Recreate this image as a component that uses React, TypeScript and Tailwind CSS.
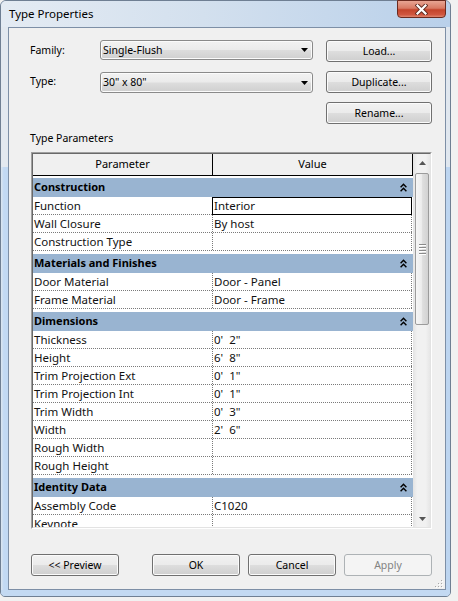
import React from "react";

const F = "font-['Noto_Sans',sans-serif]";

const btnBase =
  "flex items-center justify-center rounded-[3px] border border-[#707070] shadow-[inset_0_0_0_1px_#fbfbfb] bg-[linear-gradient(180deg,#f2f2f2_0%,#ebebeb_48%,#dddddd_52%,#cfcfcf_100%)] text-black text-[10.5px] leading-none";

function Btn({ children, className = "" }: { children: React.ReactNode; className?: string }) {
  return <div className={`${btnBase} ${className}`}>{children}</div>;
}

function Select({ value, className = "" }: { value: string; className?: string }) {
  return (
    <div
      className={`flex items-center justify-between rounded-[3px] border border-[#8a8a8a] shadow-[inset_0_0_0_1px_#fbfbfb] bg-[linear-gradient(180deg,#f2f2f2_0%,#ebebeb_48%,#dddddd_52%,#cfcfcf_100%)] pl-[2px] pr-[4px] text-[10.5px] leading-none text-black ${className}`}
    >
      <span className="whitespace-pre">{value}</span>
      <svg width="7" height="4" viewBox="0 0 7 4">
        <path d="M0 0 H7 L3.5 4 Z" fill="#000" />
      </svg>
    </div>
  );
}

function Collapse() {
  return (
    <svg width="7" height="9" viewBox="0 0 7 9">
      <path d="M0.6 4.2 L3.5 1.2 L6.4 4.2 M0.6 8.2 L3.5 5.2 L6.4 8.2" fill="none" stroke="#000" strokeWidth="1.4" />
    </svg>
  );
}

type Group = { name: string; rows: [string, string][] };

const groups: Group[] = [
  {
    name: "Construction",
    rows: [
      ["Function", "Interior"],
      ["Wall Closure", "By host"],
      ["Construction Type", ""],
    ],
  },
  {
    name: "Materials and Finishes",
    rows: [
      ["Door Material", "Door - Panel"],
      ["Frame Material", "Door - Frame"],
    ],
  },
  {
    name: "Dimensions",
    rows: [
      ["Thickness", "0'  2\""],
      ["Height", "6'  8\""],
      ["Trim Projection Ext", "0'  1\""],
      ["Trim Projection Int", "0'  1\""],
      ["Trim Width", "0'  3\""],
      ["Width", "2'  6\""],
      ["Rough Width", ""],
      ["Rough Height", ""],
    ],
  },
  {
    name: "Identity Data",
    rows: [
      ["Assembly Code", "C1020"],
      ["Keynote", ""],
    ],
  },
];

function Table() {
  return (
    <div className="ml-[1px] w-[401px] h-[377px] border border-t-[#a0a0a0] border-l-[#a0a0a0] border-r-white border-b-white">
      <div className="flex h-full border border-t-[#696969] border-l-[#696969] border-r-[#e3e3e3] border-b-[#e3e3e3] bg-white">
        <div className="w-[380px] h-full overflow-hidden">
          <div className="flex h-[22px] border-b border-black bg-[#f0f0f0] text-[11px] text-black">
            <div className="w-[180px] border-r border-black flex items-center justify-center">Parameter</div>
            <div className="w-[200px] border-r border-black flex items-center justify-center">Value</div>
          </div>
          {groups.map((g, gi) => (
            <div key={g.name} className={gi === 0 ? "mt-[2px]" : "mt-[3px]"}>
              <div className="flex h-[19px] items-center justify-between bg-[#99b4d1] pl-[1px] pr-[6px] text-[11px] font-bold text-black">
                <span>{g.name}</span>
                <Collapse />
              </div>
              {g.rows.map(([k, v]) => (
                <div key={k} className="flex h-[18px] w-[379px] border-b border-dotted border-[#7a7a7a] text-[11.5px] text-[#111]">
                  <div className="w-[180px] border-r border-dotted border-[#7a7a7a] flex items-center pl-[1px]">{k}</div>
                  <div className="relative flex-1 border-r border-dotted border-[#7a7a7a] flex items-center pl-[1px] whitespace-pre">
                    {v}
                    {k === "Function" && (
                      <span className="absolute -left-px -right-px top-0 -bottom-px border border-black" />
                    )}
                  </div>
                </div>
              ))}
            </div>
          ))}
        </div>
        <div className="w-[17px] h-full flex flex-col bg-[linear-gradient(90deg,#e3e3e3,#f1f1f1_25%,#f1f1f1_75%,#e6e6e6)]">
          <div className="h-[17px] flex items-center justify-center pl-[1px]">
            <svg width="7" height="4" viewBox="0 0 7 4">
              <path d="M0 4 H7 L3.5 0 Z" fill="#555" />
            </svg>
          </div>
          <div className="flex-1">
            <div className="mt-[2px] ml-[2px] w-[14px] h-[152px] rounded-[2px] border border-[#9b9b9b] bg-[linear-gradient(90deg,#f6f6f6,#ededed_45%,#dedede_55%,#d2d2d2)] flex flex-col items-center justify-center gap-px">
              <div className="w-[7px] h-px bg-[#8a8a8a] shadow-[0_1px_0_#fff]" />
              <div className="w-[7px] h-px bg-[#8a8a8a] shadow-[0_1px_0_#fff] mt-px" />
              <div className="w-[7px] h-px bg-[#8a8a8a] shadow-[0_1px_0_#fff] mt-px" />
              <div className="w-[7px] h-px bg-[#8a8a8a] shadow-[0_1px_0_#fff] mt-px" />
            </div>
          </div>
          <div className="h-[17px] flex items-center justify-center pl-[1px]">
            <svg width="7" height="4" viewBox="0 0 7 4">
              <path d="M0 0 H7 L3.5 4 Z" fill="#555" />
            </svg>
          </div>
        </div>
      </div>
    </div>
  );
}

function SizeGrip() {
  const dots = [
    [6, 0],
    [3, 3],
    [6, 3],
    [0, 6],
    [3, 6],
    [6, 6],
  ];
  return (
    <svg width="8" height="8" viewBox="0 0 8 8" className="absolute right-[2px] bottom-[1px]">
      {dots.map(([x, y], i) => (
        <g key={i}>
          <rect x={x + 1} y={y + 1} width="1" height="1" fill="#ffffff" />
          <rect x={x} y={y} width="1" height="1" fill="#a8a8a8" />
        </g>
      ))}
    </svg>
  );
}

export default function App() {
  return (
    <div className={`w-[458px] h-[601px] bg-[#f1f1f1] overflow-hidden ${F}`}>
      <div className="relative w-[451px] h-[597px] border border-[#6f7f93] rounded-t-[6px] rounded-b-[5px] flex flex-col bg-[#c3d9f2]">
        <div className="h-[26px] flex items-center pl-[8px] pb-[1px] rounded-t-[5px] bg-[linear-gradient(90deg,#e4ebf3_0%,#d3e0ee_45%,#b9d0ea_100%)] text-[11.5px] text-black">
          Type Properties
        </div>
        <div className="flex h-[563px]">
          <div className="w-[7px] flex flex-col">
            <div className="h-[140px] bg-[#e3e9f0]" />
            <div className="flex-1 bg-[linear-gradient(90deg,#dce6f0,#c2d9f3_40%)]" />
          </div>
          <div className="relative w-[438px] border border-[#7d8fa6] bg-[#f0f0f0] flex flex-col pl-[21px] pr-[13px] pt-[12px]">
            <div className="grid grid-cols-[70px_213px_1fr] grid-rows-[22px_22px_22px] gap-y-[9px]">
              <div className="flex items-center text-[10.5px] text-black">Family:</div>
              <div className="flex items-start">
                <Select value="Single-Flush" className="w-[213px] h-[20px]" />
              </div>
              <div className="flex justify-end">
                <Btn className="w-[106px] h-[22px]">Load...</Btn>
              </div>
              <div className="flex items-center text-[10.5px] text-black">Type:</div>
              <div className="flex items-start pt-[1px]">
                <Select value={'30" x 80"'} className="w-[213px] h-[21px]" />
              </div>
              <div className="flex justify-end">
                <Btn className="w-[106px] h-[22px]">Duplicate...</Btn>
              </div>
              <div />
              <div />
              <div className="flex justify-end">
                <Btn className="w-[106px] h-[22px]">Rename...</Btn>
              </div>
            </div>
            <div className="h-[28px] flex items-center pt-[2px] text-[10.5px] text-black">Type Parameters</div>
            <Table />
            <div className="mt-[25px] flex h-[22px]">
              <Btn className="ml-[1px] w-[88px] h-[22px]">{"<< Preview"}</Btn>
              <div className="ml-auto flex gap-[8px]">
                <Btn className="w-[88px] h-[22px] border-[#3c7fb1] shadow-[inset_0_0_0_1px_#d8effc] bg-[linear-gradient(180deg,#eaf6fd_0%,#d9f0fc_48%,#bee6fd_52%,#a7d9f5_100%)]">
                  OK
                </Btn>
                <Btn className="w-[88px] h-[22px]">Cancel</Btn>
                <div className="w-[88px] h-[22px] flex items-center justify-center rounded-[3px] border border-[#adb2b5] bg-[#f4f4f4] text-[10.5px] leading-none text-[#838383]">
                  Apply
                </div>
              </div>
            </div>
            <SizeGrip />
          </div>
          <div className="w-[4px] flex flex-col">
            <div className="h-[140px] bg-[#e0e7ef]" />
            <div className="flex-1 bg-[#bdd5f0]" />
          </div>
        </div>
        <div className="h-[6px] bg-[#c3d9f2] rounded-b-[4px]" />
        <div className="absolute right-[4px] -top-px w-[49px] h-[18px] rounded-b-[4px] border border-[#6b2a1f] bg-[linear-gradient(180deg,#e8a593_0%,#d87a64_45%,#c4442b_55%,#d0563f_85%,#e0866f_100%)] flex items-center justify-center">
          <svg width="13" height="11" viewBox="0 0 13 11">
            <path d="M2.5 1.5 L10.5 9.5 M10.5 1.5 L2.5 9.5" stroke="#5e2a20" strokeWidth="4" strokeLinecap="square" />
            <path d="M2.5 1.5 L10.5 9.5 M10.5 1.5 L2.5 9.5" stroke="#ffffff" strokeWidth="2.2" strokeLinecap="square" />
          </svg>
        </div>
      </div>
    </div>
  );
}
